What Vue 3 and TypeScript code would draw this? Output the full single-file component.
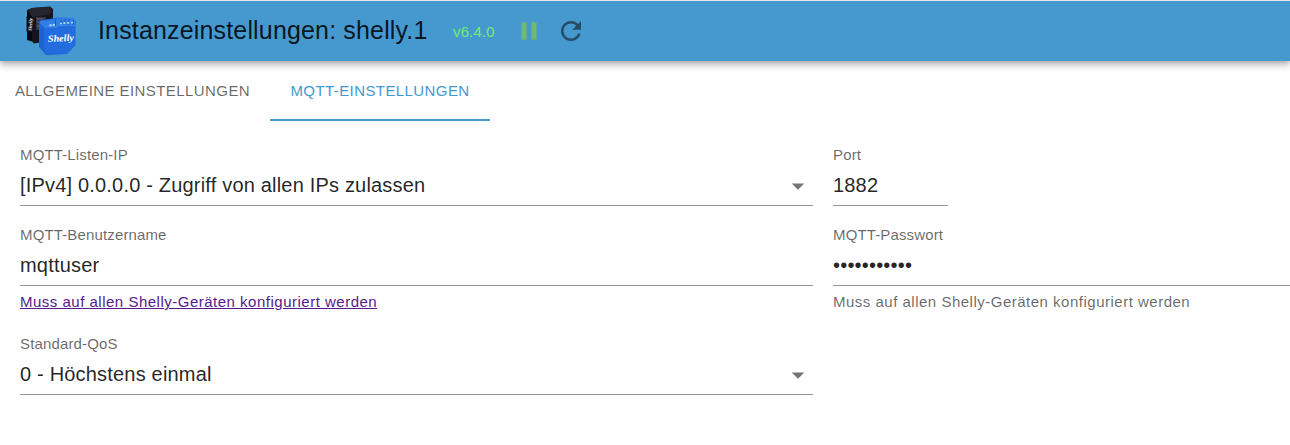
<script setup lang="ts">
import { ref } from 'vue'

interface Tab {
  id: string
  label: string
}

const tabs: Tab[] = [
  { id: 'general', label: 'Allgemeine Einstellungen' },
  { id: 'mqtt', label: 'MQTT-Einstellungen' },
]
const activeTab = ref('mqtt')
const port = ref('1882')
const user = ref('mqttuser')
const password = ref('shellypass1')
const hint = 'Muss auf allen Shelly-Geräten konfiguriert werden'
</script>

<template>
  <div class="page">
    <header class="bar">
      <svg class="logo" viewBox="0 0 60 60" aria-hidden="true">
        <path d="M10 8 28 6.5 31 9V40L12 43.500 10 41.500 5 40V32L4.500 31V17L5 16V10Z" fill="#14161c" />
        <path d="M6 10 10 8 28 7 30 9 29 14 10 17Z" fill="#23262d" />
        <path d="M10 17V41L5 39V11Z" fill="#08090c" />
        <rect x="14" y="17" width="10" height="13" fill="#2e3a55" />
        <path d="M15 19h6M15 22h3M15 26h4" stroke="#8c5271" />
        <text class="minilogo" transform="translate(9.500 31) rotate(-86)">Shelly</text>
        <path d="M17 21.500 20 20 36 17.500 51 18 53.500 21V45L45 54 24 55 17 47Z" fill="#1c62d4" />
        <path d="M22 27 53 25V45L45 53 25 54 22 50Z" fill="#226ce0" />
        <path d="M18 21 35 19V17.500L51 18 53.500 20V25L36 25.500 34 27H22L18 24Z" fill="#2f7fe4" />
        <path d="M33.500 20v6M39 19v6M43 19v6M47 19v6M51 20v5" stroke="#1450b0" stroke-width=".8" />
        <path d="M22 27H35L37 25.500H53" fill="none" stroke="#4b94ee" stroke-width=".7" />
        <g fill="#a5d8f6">
          <circle cx="28.500" cy="25.300" r="1.200" />
          <circle cx="31.800" cy="25" r="1.200" />
          <circle cx="39" cy="23.500" r="1.100" />
          <circle cx="42.500" cy="23.200" r="1.100" />
          <circle cx="46.200" cy="22.900" r="1.100" />
          <circle cx="50" cy="22.600" r="1.100" />
        </g>
        <text class="wordmark" x="26" y="42" textLength="26" lengthAdjust="spacingAndGlyphs" transform="rotate(-3 26 42)">Shelly</text>
      </svg>
      <h1 class="title">Instanzeinstellungen: shelly.1</h1>
      <span class="version">v6.4.0</span>
      <svg class="pause" viewBox="0 0 24 24"><path d="M6 19h4V5H6v14zm8-14v14h4V5h-4z" /></svg>
      <svg class="refresh" viewBox="0 0 24 24">
        <path d="M17.65 6.35C16.2 4.9 14.21 4 12 4c-4.42 0-7.99 3.58-7.99 8s3.57 8 7.99 8c3.73 0 6.84-2.55 7.73-6h-2.08c-.82 2.33-3.04 4-5.65 4-3.31 0-6-2.69-6-6s2.69-6 6-6c1.66 0 3.14.69 4.22 1.78L13 11h7V4l-2.35 2.35z" />
      </svg>
    </header>

    <nav class="tabs">
      <button
        v-for="tab in tabs"
        :key="tab.id"
        class="tab"
        :class="[tab.id, { active: activeTab === tab.id }]"
        @click="activeTab = tab.id"
      >{{ tab.label }}</button>
    </nav>

    <main class="form">
      <div class="field">
        <span class="label">MQTT-Listen-IP</span>
        <div class="control">
          <span class="value">[IPv4] 0.0.0.0 - Zugriff von allen IPs zulassen</span>
          <svg class="arrow" viewBox="0 0 24 24"><path d="M7 10l5 5 5-5z" /></svg>
        </div>
      </div>
      <div class="field narrow">
        <label class="label" for="port">Port</label>
        <div class="control"><input id="port" v-model="port" class="value" /></div>
      </div>
      <div class="field">
        <label class="label" for="user">MQTT-Benutzername</label>
        <div class="control"><input id="user" v-model="user" class="value" /></div>
        <a class="helper link" href="#">{{ hint }}</a>
      </div>
      <div class="field">
        <label class="label" for="password">MQTT-Passwort</label>
        <div class="control"><input id="password" v-model="password" type="password" class="value" /></div>
        <span class="helper">{{ hint }}</span>
      </div>
      <div class="field qos">
        <span class="label">Standard-QoS</span>
        <div class="control">
          <span class="value">0 - Höchstens einmal</span>
          <svg class="arrow" viewBox="0 0 24 24"><path d="M7 10l5 5 5-5z" /></svg>
        </div>
      </div>
    </main>
  </div>
</template>

<style>
body {
  background: #fff;
  overflow: hidden;
}
</style>

<style scoped>
.page {
  box-sizing: border-box;
  height: 445px;
  overflow: hidden;
  border-top: 1px solid #e6e6e6;
  font-family: "Liberation Sans", Arial, sans-serif;
}
.bar {
  display: flex;
  align-items: center;
  height: 60px;
  padding-left: 22px;
  background: #4699cf;
  box-shadow: 0 2px 5px -1px rgba(0, 0, 0, 0.2), 0 5px 6px rgba(0, 0, 0, 0.14), 0 1px 12px rgba(0, 0, 0, 0.12);
}
.logo {
  width: 60px;
  height: 60px;
  flex: none;
  margin-top: -2px;
}
.wordmark {
  font: italic bold 9.5px "Liberation Serif", serif;
  fill: #fff;
}
.minilogo {
  font: italic bold 5px "Liberation Serif", serif;
  fill: #fff;
}
.title {
  width: 339px;
  margin: 0 0 2px 16px;
  font-size: 25px;
  line-height: 40px;
  font-weight: 400;
  letter-spacing: 0.16px;
  color: rgba(0, 0, 0, 0.87);
  white-space: nowrap;
}
.version {
  width: 62px;
  margin-left: 16px;
  font-size: 15px;
  letter-spacing: 0.14px;
  color: #72ec72;
}
.pause {
  width: 30px;
  height: 32px;
  fill: #70b96e;
  flex: none;
  margin-left: -1px;
}
.refresh {
  width: 30px;
  height: 30px;
  fill: #254b65;
  flex: none;
  margin-left: 12px;
}
.tabs {
  display: flex;
  height: 60px;
}
.tab {
  box-sizing: border-box;
  padding: 1px 0 0;
  border: 0;
  border-bottom: 2px solid transparent;
  background: none;
  font: 15px/57px "Liberation Sans", Arial, sans-serif;
  letter-spacing: 0.42px;
  text-transform: uppercase;
  white-space: nowrap;
  color: rgba(0, 0, 0, 0.6);
}
.general {
  width: 270px;
  padding-right: 5px;
}
.mqtt {
  width: 220px;
}
.tab.active {
  color: #4699cf;
  border-bottom-color: #4699cf;
}
.form {
  display: grid;
  grid-template-columns: 793px 793px;
  grid-template-rows: 80px 109px 80px;
  column-gap: 20px;
  padding: 25px 0 0 20px;
}
.field {
  display: flex;
  flex-direction: column;
  align-items: flex-start;
}
.narrow {
  width: 115px;
}
.label {
  height: 18px;
  font-size: 15px;
  line-height: 18px;
  letter-spacing: 0.14px;
  color: rgba(0, 0, 0, 0.6);
}
.control {
  display: flex;
  box-sizing: border-box;
  width: 100%;
  height: 42px;
  align-items: center;
  border-bottom: 1px solid #949494;
}
.value {
  flex: 1;
  min-width: 0;
  height: 40px;
  box-sizing: border-box;
  padding: 0;
  border: 0;
  outline: 0;
  background: none;
  font: 20px/40px "Liberation Sans", Arial, sans-serif;
  letter-spacing: 0.1876px;
  color: rgba(0, 0, 0, 0.87);
}
.arrow {
  width: 30px;
  height: 30px;
  margin-top: 2px;
  fill: #757575;
}
.helper {
  margin-top: 6px;
  font-size: 15px;
  line-height: 20px;
  letter-spacing: 0.5px;
  color: rgba(0, 0, 0, 0.6);
}
.link {
  color: #551a8b;
}
</style>
